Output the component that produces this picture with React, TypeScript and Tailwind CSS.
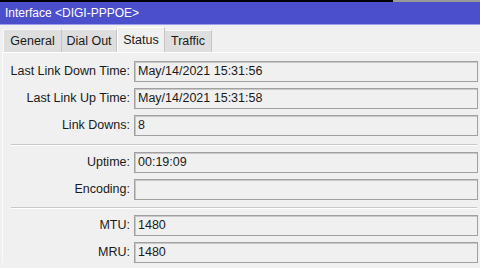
import React from "react";

const Row = ({ label, value }: { label: string; value: string }) => (
  <div className="flex h-[21px] items-center">
    <div className="w-[128px] shrink-0 text-right pr-[1px] text-[#1a1a1a]">{label}</div>
    <div className="ml-[3px] mr-[2px] flex-1 h-[21px] border border-[#a0a0a0] shadow-[inset_1px_1px_0_0_#c8c8c8] bg-[#f0f0f0] flex items-center pl-[3px] text-[#1a1a1a]">
      {value}
    </div>
  </div>
);

const Sep = ({ cls }: { cls: string }) => (
  <div className={`ml-[8px] mr-[3px] h-[2px] border-t border-[#c8c8c8] border-b border-b-white ${cls}`} />
);

export default function App() {
  return (
    <div className="w-[480px] h-[268px] overflow-hidden bg-[#f0f0f0] font-['Liberation_Sans',sans-serif] text-[12.5px] leading-none">
      <div className="flex h-[2px]">
        <div className="w-[393px] bg-black" />
        <div className="flex-1 bg-[#9a9a9a]" />
      </div>
      <div className="h-[23px] bg-[#4b4fcc] border-b border-[#9c9ee6] text-white text-[12px] pl-[5px] flex items-center">
        Interface &lt;DIGI-PPPOE&gt;
      </div>
      <div className="flex items-end h-[27px] pl-[3px]">
        <div className="w-[59px] h-[23px] bg-[#dedede] border-l border-t border-[#f8f8f8] border-r border-r-[#c4c4c4] flex items-center justify-center text-[#1a1a1a]">General</div>
        <div className="w-[55px] h-[23px] bg-[#dedede] border-t border-[#f8f8f8] border-r border-r-[#c4c4c4] flex items-center justify-center text-[#1a1a1a]">Dial Out</div>
        <div className="w-[48px] h-[25px] bg-[#f0f0f0] border-t border-l border-white border-r border-r-[#c4c4c4] flex items-start pt-[6px] justify-center text-[#1a1a1a]">Status</div>
        <div className="w-[47px] h-[22px] bg-[#dedede] border-t border-[#f8f8f8] border-r border-r-[#c4c4c4] flex items-center justify-center text-[#1a1a1a]">Traffic</div>
      </div>
      <div className="border-t border-white border-l border-l-[#fafafa] ml-[2px] pt-[8px] flex flex-col">
        <div className="flex flex-col gap-[6px]">
          <Row label="Last Link Down Time:" value="May/14/2021 15:31:56" />
          <Row label="Last Link Up Time:" value="May/14/2021 15:31:58" />
          <Row label="Link Downs:" value="8" />
        </div>
        <Sep cls="mt-[8px] mb-[6px]" />
        <div className="flex flex-col gap-[6px]">
          <Row label="Uptime:" value="00:19:09" />
          <Row label="Encoding:" value="" />
        </div>
        <Sep cls="mt-[7px] mb-[6px]" />
        <div className="flex flex-col gap-[6px]">
          <Row label="MTU:" value="1480" />
          <Row label="MRU:" value="1480" />
        </div>
      </div>
    </div>
  );
}
